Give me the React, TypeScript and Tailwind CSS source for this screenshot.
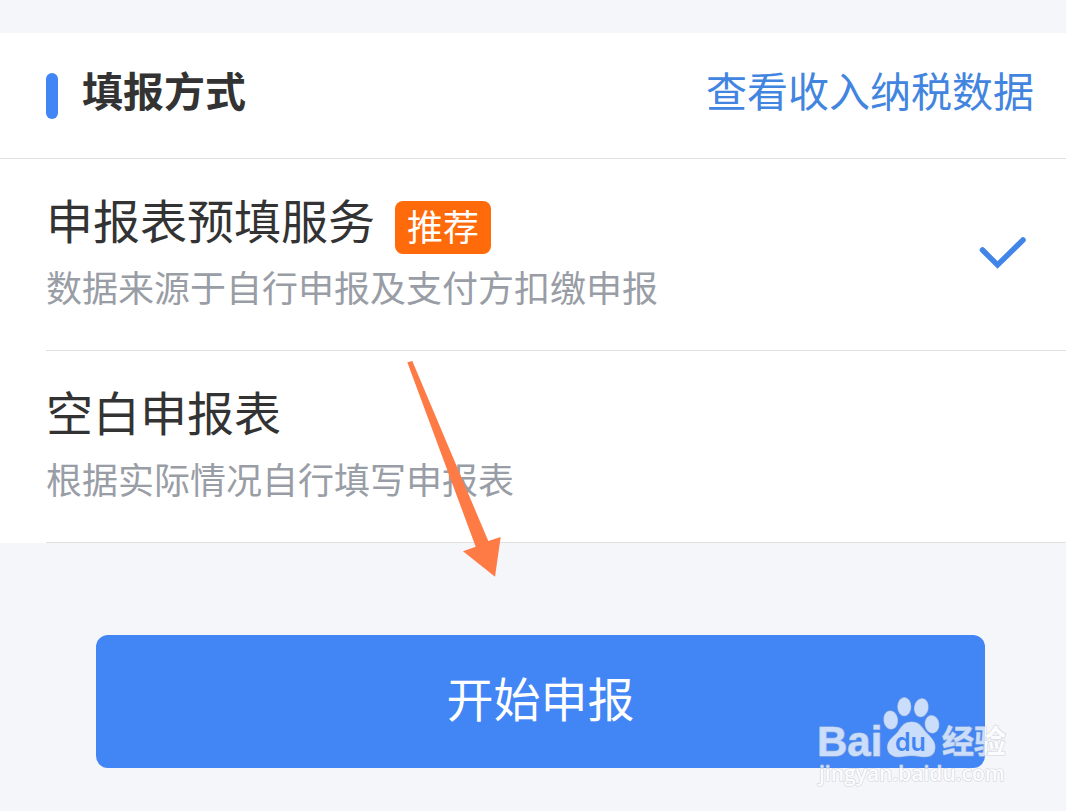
import { useState } from "react";

const OPTIONS = [
  {
    id: "prefilled",
    title: "申报表预填服务",
    description: "数据来源于自行申报及支付方扣缴申报",
    badge: "推荐",
  },
  {
    id: "blank",
    title: "空白申报表",
    description: "根据实际情况自行填写申报表",
  },
];

function CheckIcon() {
  return (
    <svg
      width="48"
      height="36"
      viewBox="0 0 48 36"
      fill="none"
      stroke="#4285e8"
      strokeWidth="5.500"
      strokeLinecap="round"
      strokeLinejoin="miter"
      aria-hidden="true"
    >
      <path d="M3.500 17 18.500 32 44 7" />
    </svg>
  );
}

function Arrow() {
  return (
    <svg
      className="pointer-events-none absolute left-[407px] top-[361px]"
      width="94"
      height="216"
      viewBox="0 0 94 216"
      aria-hidden="true"
    >
      <path d="M0.300 1.300 5.300 0 81.300 180 93.700 176 88 215.700 56 190.300 68.700 185.700Z" fill="#ff7b45" />
    </svg>
  );
}

function Watermark() {
  return (
    <svg
      className="pointer-events-none absolute bottom-5 right-14"
      width="192"
      height="96"
      viewBox="0 0 192 96"
      overflow="visible"
    >
      <g
        fill="#fff"
        stroke="#c4c7cf"
        strokeWidth="1.200"
        paintOrder="stroke"
        strokeLinejoin="round"
        opacity="0.72"
      >
        <text x="-1" y="61" fontSize="42" fontWeight="700" fontFamily="Liberation Sans, sans-serif">
          Bai
        </text>
        <ellipse cx="72.700" cy="25" rx="6.800" ry="9" transform="rotate(-8 72.700 25)" />
        <ellipse cx="86.300" cy="11.700" rx="6.500" ry="9" />
        <ellipse cx="103.300" cy="12.700" rx="6.800" ry="9" transform="rotate(10 103.300 12.700)" />
        <ellipse cx="114" cy="29.300" rx="6.800" ry="8.700" transform="rotate(-8 114 29.300)" />
        <path d="M93.700 27C86 27 83.500 32 80 37C76 42 69.500 45 69.500 52C69.500 58 74 61.700 80 61.700C85 61.700 88 60.500 93.700 60.500C99 60.500 102 61.700 107 61.700C113.500 61.700 117 58 117 52C117 45 111 41 107.500 37C103.500 32 101 27 93.700 27Z" />
        <text x="124" y="58" fontSize="32" fontWeight="700" fontFamily="Noto Sans CJK SC, sans-serif">
          经验
        </text>
        <text x="1" y="86" fontSize="21" fontWeight="600" fontFamily="Open Sans, sans-serif">
          jingyan.baidu.com
        </text>
      </g>
      <text x="77" y="56" fontSize="25" fontWeight="600" fill="#4285f4" fontFamily="Inter, sans-serif">
        du
      </text>
    </svg>
  );
}

export default function App() {
  const [selected, setSelected] = useState("prefilled");

  return (
    <main className="relative min-h-screen bg-[#f4f6fa] pt-[33px] font-['Noto_Sans_CJK_SC',sans-serif] text-[#333]">
      <section className="bg-white">
        <header className="flex items-start border-b border-[#e0e0e0] pl-[46px] pr-8 pt-7 pb-[39px]">
          <span className="mt-3 h-[46px] w-3 rounded-full bg-[#4285f4]" />
          <h1 className="ml-6 text-[41px] leading-[56px] font-bold">填报方式</h1>
          <a href="#income" className="ml-auto text-[41px] leading-[56px] text-[#4285e0]">
            查看收入纳税数据
          </a>
        </header>

        <form>
          {OPTIONS.map((option) => (
            <label
              key={option.id}
              className="ml-[46px] flex cursor-pointer items-center border-b border-[#e0e0e0] pr-[39px] pt-8 pb-10"
            >
              <input
                type="radio"
                name="method"
                value={option.id}
                checked={selected === option.id}
                onChange={() => setSelected(option.id)}
                className="sr-only"
              />
              <span className="flex-1">
                <span className="flex h-14 items-start">
                  <span className="text-[47px] leading-[56px]">{option.title}</span>
                  {option.badge && (
                    <span className="mt-2.5 ml-5 rounded-lg bg-[#ff6b0a] px-3 pb-[5px] text-[36px] leading-[48px] text-white">
                      {option.badge}
                    </span>
                  )}
                </span>
                <span className="mt-[15px] block text-[36px] leading-[48px] text-[#999da5]">
                  {option.description}
                </span>
              </span>
              {selected === option.id && <CheckIcon />}
            </label>
          ))}
        </form>
      </section>

      <div className="pt-[92px] pb-[43px] pl-24 pr-[81px]">
        <button
          type="button"
          className="w-full rounded-xl bg-[#4285f4] pt-[34px] pb-[43px] text-[47px] leading-[56px] text-white"
        >
          开始申报
        </button>
      </div>

      <Arrow />
      <Watermark />
    </main>
  );
}
